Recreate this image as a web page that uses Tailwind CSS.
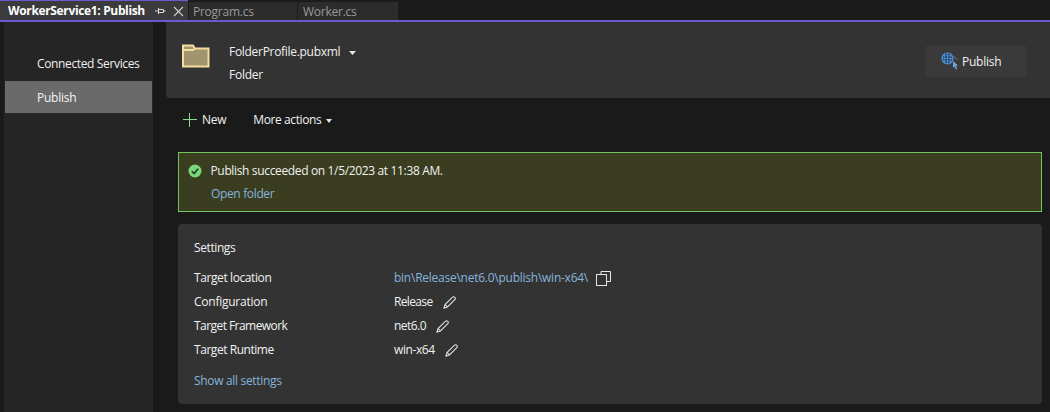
<!DOCTYPE html>
<html><head><meta charset="utf-8"><script src="https://cdn.jsdelivr.net/npm/@tailwindcss/browser@4"></script></head>
<body class="bg-[#1a1a1a]">
<div class="w-[1050px] h-[412px] overflow-hidden flex flex-col font-['Open_Sans','Noto_Sans',sans-serif] text-[12px] tracking-[-0.25px] text-[#f1f1f1] bg-[#1a1a1a]">
  <div class="h-[20px] flex items-stretch bg-[#1b1b1b] shrink-0">
    <div class="w-[188px] h-[20px] border-t border-t-[#6a5acd] bg-[#3b3b3d] flex items-center pl-[8px] pt-[1px] font-bold text-white tracking-[-0.35px]">
      <span class="w-[147px] whitespace-nowrap">WorkerService1: Publish</span>
      <svg width="11" height="10" viewBox="0 0 11 10" fill="none" stroke="#d8d8d8"><path d="M0 5H3.5M3.5 2V8M3.5 3.5H8.5V6.5H3.5M8.5 5H10.5"/></svg>
      <svg width="11" height="11" viewBox="0 0 11 11" class="ml-[7px]" fill="none" stroke="#d0d0d0" stroke-width="1.1"><path d="M1 1L10 10M10 1L1 10"/></svg>
    </div>
    <div class="w-[108px] ml-[1px] mt-[2px] pt-[1px] bg-[#2c2c2c] pl-[4px] text-[#9a9a9a] flex items-center">Program.cs</div>
    <div class="w-[100px] ml-[1px] mt-[2px] pt-[1px] bg-[#2c2c2c] pl-[5px] text-[#9a9a9a] flex items-center">Worker.cs</div>
  </div>
  <div class="h-[2px] bg-[#6a5acd] shrink-0"></div>
  <div class="flex flex-1 min-h-0">
    <div class="w-[4px] bg-[#1b1b1b] shrink-0"></div>
    <div class="w-[149px] bg-[#252526] shrink-0 pt-[27px] pl-[1px]">
      <div class="h-[32px] pl-[32px] pb-[2px] flex items-center text-[#efefef] tracking-[-0.36px]">Connected Services</div>
      <div class="h-[32px] w-[147px] bg-[#6a6a6a] pl-[32px] pt-[1px] flex items-center text-[#f5f5f5]">Publish</div>
    </div>
    <div class="flex-1 min-w-0 pl-[13px]">
      <div class="h-[76px] bg-[#333333] rounded-bl-[4px] flex items-start">
        <svg width="30" height="26" viewBox="0 0 30 26" class="ml-[15px] mt-[21px]" fill="#a2946c" stroke="#f6dc9f" stroke-width="2"><path d="M2 23.5V2.5H12L14 5.5H27.5V23.5Z"/><path d="M2 7H12L14 5.5" fill="none"/></svg>
        <div class="ml-[18px] mt-[21px]">
          <div class="h-[18px] flex items-center whitespace-nowrap tracking-[-0.3px]">FolderProfile.pubxml
            <svg width="7" height="4" viewBox="0 0 7 4" class="ml-[9px] mt-[1px]" fill="#e6e6e6"><path d="M0 0H7L3.5 4Z"/></svg></div>
          <div class="mt-[5px] h-[18px] flex items-center">Folder</div>
        </div>
        <div class="ml-auto mr-[24px] mt-[24px] w-[100px] h-[31px] bg-[#3a3a3a] flex items-center pl-[15px]">
          <svg width="18" height="18" viewBox="0 0 18 18" fill="none" class="mr-[2px] mt-[-1px]">
            <circle cx="6.5" cy="6.5" r="5.5" stroke="#4f94d8" stroke-width="1.2" fill="#27405c"/>
            <path d="M1 6.5H12M2 3.8H11M2 9.2H11M6.5 1V12M4 1.5C3 5 3 8 4 11.5M9 1.5C10 5 10 8 9 11.5" stroke="#4f94d8" stroke-width="0.8"/>
            <path d="M12 9L17 13.5L15 13.8L16.2 17L14.8 17.6L13.6 14.5L12 16Z" fill="#6ea5dc"/>
            <path d="M13 4.5L14 5.5M15 6.5L16 7.5" stroke="#9db9d6"/>
          </svg>
          <span class="ml-[1px]">Publish</span>
        </div>
      </div>
      <div class="h-[44px] flex items-center pl-[17px]">
        <svg width="14" height="14" viewBox="0 0 14 14" stroke="#8fd98f" fill="none"><path d="M6.5 0V14M0 6.5H14"/></svg>
        <span class="ml-[5px]">New</span>
        <span class="ml-[27px] tracking-[-0.4px]">More actions</span>
        <svg width="6" height="4" viewBox="0 0 6 4" class="ml-[5px] mt-[2px]" fill="#e6e6e6"><path d="M0 0H6L3 4Z"/></svg>
      </div>
      <div class="ml-[12px] mr-[8px] mt-[10px] h-[60px] border border-[#72c65f] bg-[#3a3d20] pl-[9px] pt-[9px]">
        <div class="flex items-center h-[18px]">
          <svg width="14" height="14" viewBox="0 0 14 14" class="ml-[-0.5px]"><circle cx="7" cy="7" r="6.5" fill="#7ad67a"/><path d="M3.8 7.2L6.1 9.5L10.2 4.8" fill="none" stroke="#1f3a1f" stroke-width="1.6"/></svg>
          <span class="ml-[9px] tracking-[-0.35px]">Publish succeeded on 1/5/2023 at 11:38 AM.</span>
        </div>
        <div class="ml-[23px] mt-[5px] h-[18px] flex items-center text-[#85b4dc] tracking-[-0.35px]">Open folder</div>
      </div>
      <div class="ml-[12px] mr-[8px] mt-[12px] h-[180px] bg-[#333333] rounded-[4px] pl-[16px] pt-[15px]">
        <div class="h-[18px] flex items-center tracking-[-0.4px]">Settings</div>
        <div class="mt-[9px] grid grid-cols-[200px_1fr] auto-rows-[24px] items-center">
          <div class="tracking-[-0.4px]">Target location</div>
          <div class="flex items-center"><span class="text-[#85b4dc]">bin\Release\net6.0\publish\win-x64\</span>
            <svg width="15" height="15" viewBox="0 0 15 15" class="ml-[8px]" fill="none" stroke="#e6e6e6"><path d="M5 3.5V0.5H14.5V10.5H10.5"/><rect x="0.5" y="3.5" width="10" height="11"/></svg></div>
          <div>Configuration</div>
          <div class="flex items-center"><span class="tracking-[-0.65px]">Release</span>
            <svg width="13" height="13" viewBox="0 0 13 13" class="ml-[10px]" fill="none" stroke="#dcdcdc" stroke-width="1.1"><path d="M1 12L2 8.5L9.5 1.2C10.3 0.6 11.2 0.8 11.8 1.4C12.4 2 12.4 3 11.8 3.6L4.5 10.9Z"/><path d="M2 8.5L4.5 10.9M1 12L2.6 11.5" /></svg></div>
          <div class="tracking-[-0.55px]">Target Framework</div>
          <div class="flex items-center"><span class="tracking-[-0.55px]">net6.0</span>
            <svg width="13" height="13" viewBox="0 0 13 13" class="ml-[10px]" fill="none" stroke="#dcdcdc" stroke-width="1.1"><path d="M1 12L2 8.5L9.5 1.2C10.3 0.6 11.2 0.8 11.8 1.4C12.4 2 12.4 3 11.8 3.6L4.5 10.9Z"/><path d="M2 8.5L4.5 10.9M1 12L2.6 11.5" /></svg></div>
          <div class="tracking-[-0.45px]">Target Runtime</div>
          <div class="flex items-center"><span class="tracking-[-0.4px]">win-x64</span>
            <svg width="13" height="13" viewBox="0 0 13 13" class="ml-[10px]" fill="none" stroke="#dcdcdc" stroke-width="1.1"><path d="M1 12L2 8.5L9.5 1.2C10.3 0.6 11.2 0.8 11.8 1.4C12.4 2 12.4 3 11.8 3.6L4.5 10.9Z"/><path d="M2 8.5L4.5 10.9M1 12L2.6 11.5" /></svg></div>
        </div>
        <div class="mt-[10px] h-[18px] flex items-center text-[#85b4dc] tracking-[-0.32px]">Show all settings</div>
      </div>
    </div>
  </div>
</div>
</body></html>
